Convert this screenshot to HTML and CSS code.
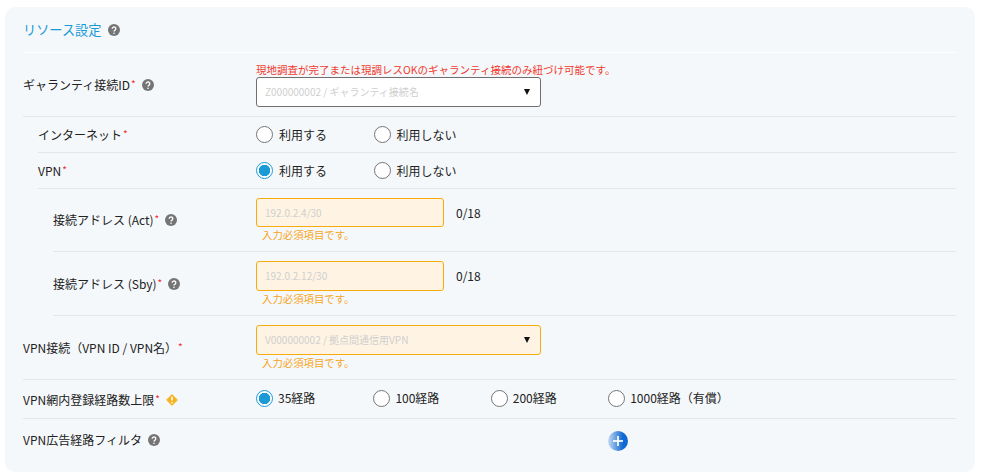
FILE: index.html
```html
<!DOCTYPE html>
<html lang="ja">
<head>
<meta charset="utf-8">
<title>リソース設定</title>
<link rel="stylesheet" href="styles.css">
</head>
<body>
<svg class="defs" width="0" height="0" aria-hidden="true">
  <symbol id="help" viewBox="0 0 12 12">
    <circle cx="6" cy="6" r="6" fill="#757575"/>
    <path d="M4.2 4.7a1.8 1.7 0 1 1 2.8 1.4c-.7.5-1 .8-1 1.5" fill="none" stroke="#fff" stroke-width="1.3"/>
    <circle cx="6" cy="9.3" r=".8" fill="#fff"/>
  </symbol>
</svg>
<main class="card">
  <h2 class="title">リソース設定 <svg class="help"><use href="#help"/></svg></h2>

  <section class="row row-guarantee">
    <div class="label">ギャランティ接続ID<i>*</i><svg class="help"><use href="#help"/></svg></div>
    <div class="control">
      <p class="notice">現地調査が完了または現調レスOKのギャランティ接続のみ紐づけ可能です。</p>
      <div class="select"><span>Z000000002 / ギャランティ接続名</span><b class="arrow"></b></div>
    </div>
  </section>

  <section class="row row-radio indent1">
    <div class="label">インターネット<i>*</i></div>
    <div class="control radios">
      <span class="radio"><b class="dot"></b>利用する</span>
      <span class="radio"><b class="dot"></b>利用しない</span>
    </div>
  </section>

  <section class="row row-radio indent1">
    <div class="label">VPN<i>*</i></div>
    <div class="control radios">
      <span class="radio"><b class="dot on"></b>利用する</span>
      <span class="radio"><b class="dot"></b>利用しない</span>
    </div>
  </section>

  <section class="row row-address indent2">
    <div class="label">接続アドレス (Act)<i>*</i><svg class="help"><use href="#help"/></svg></div>
    <div class="control">
      <div class="input-line"><div class="input">192.0.2.4/30</div><span class="count">0/18</span></div>
      <p class="error">入力必須項目です。</p>
    </div>
  </section>

  <section class="row row-sby indent2">
    <div class="label">接続アドレス (Sby)<i>*</i><svg class="help"><use href="#help"/></svg></div>
    <div class="control">
      <div class="input-line"><div class="input tall">192.0.2.12/30</div><span class="count">0/18</span></div>
      <p class="error">入力必須項目です。</p>
    </div>
  </section>

  <section class="row row-sby">
    <div class="label">VPN接続（VPN ID / VPN名）<i>*</i></div>
    <div class="control">
      <div class="select warn"><span>V000000002 / 拠点間通信用VPN</span><b class="arrow"></b></div>
      <p class="error">入力必須項目です。</p>
    </div>
  </section>

  <section class="row row-limit">
    <div class="label">VPN網内登録経路数上限<i>*</i>
      <svg class="warn-icon" viewBox="0 0 12 12"><path d="M6 0 12 6 6 12 0 6Z" fill="#f5b21f" stroke="#f5b21f" stroke-width="1" stroke-linejoin="round" transform="translate(.6 .6) scale(.9)"/><path d="M6 2.8v3.8" stroke="#fff" stroke-width="1.5"/><circle cx="6" cy="8.5" r=".85" fill="#fff"/></svg>
    </div>
    <div class="control radios wide">
      <span class="radio"><b class="dot on"></b>35経路</span>
      <span class="radio"><b class="dot"></b>100経路</span>
      <span class="radio"><b class="dot"></b>200経路</span>
      <span class="radio"><b class="dot"></b>1000経路（有償）</span>
    </div>
  </section>

  <section class="row row-filter">
    <div class="label">VPN広告経路フィルタ<svg class="help"><use href="#help"/></svg></div>
    <div class="control add"><span class="plus"></span></div>
  </section>
</main>
</body>
</html>
```
FILE: styles.css
```css
* { box-sizing: border-box; }
html, body { margin: 0; padding: 0; background: #fff; }
body {
  width: 982px; height: 474px; overflow: hidden;
  padding: 7px 7px 2px 5px;
  font-family: "Noto Sans CJK JP", "Noto Sans", sans-serif;
  font-size: 12px; color: #222; line-height: 16px;
}
.defs { position: absolute; }
.card {
  height: 465px; background: #f5f8fb; border-radius: 10px;
  padding: 0 19px 0 18px;
}
.title {
  margin: 0; height: 46px; padding-top: 15px;
  border-bottom: 1px solid #fff;
  font-size: 13.2px; font-weight: 400; color: #1b9ad6;
  display: flex; align-items: flex-start; gap: 2px;
}
.title .help { margin: 2px 0 0 5px; }
.help { width: 12px; height: 12px; flex: none; margin-left: 6px; }
.row { display: flex; border-bottom: 1px solid #e3e7eb; align-items: center; }
.row:last-child { border-bottom: 0; align-items: flex-start; }
.label { width: 233px; flex: none; display: flex; align-items: center; white-space: nowrap; }
.label i { color: #f02b2b; font-style: normal; font-size: 10px; margin-left: 1px; align-self: flex-start; line-height: 14px; }
.indent1 { margin-left: 15px; }
.indent1 .label { width: 218px; }
.indent2 { margin-left: 30px; }
.indent2 .label { width: 203px; }
.row-guarantee { height: 64px; }
.row-radio { height: 36px; }
.row-address { height: 63px; }
.row-sby { height: 64px; }
.row-limit { height: 39px; }
.row-limit .label { padding-top: 2px; }
.row-limit .control { margin-top: -2px; }
.row-filter { height: 40px; padding-top: 13px; }
.notice { margin: 0; color: #f03a2e; font-size: 10.5px; line-height: 14px; white-space: nowrap; }
.select {
  width: 285px; height: 30px; border: 1px solid #6f6f6f; border-radius: 3px;
  background: #fff; display: flex; align-items: center; justify-content: space-between;
  padding: 0 10px 0 8px; font-size: 10px; color: #cfcfcf;
}
.select.warn { background: #fff4e3; border-color: #f7ab0c; }
.arrow { width: 0; height: 0; border: 3.5px solid transparent; border-top: 6px solid #111; border-bottom: 0; }
.radios { display: flex; gap: 46.5px; align-items: center; }
.radios.wide { gap: 0; }
.radios.wide .radio { width: 117.4px; gap: 5px; }
.radio { display: inline-flex; align-items: center; gap: 6px; white-space: nowrap; }
.dot {
  width: 17px; height: 17px; flex: none; border-radius: 50%;
  border: 1px solid #757575; background: #fff; display: block;
}
.dot.on { border-color: #1b9ad6; background: radial-gradient(circle, #1b9ad6 0 5.4px, #fff 6px); }
.input-line { display: flex; align-items: center; gap: 12px; }
.input {
  width: 188px; height: 29px; border: 1px solid #f7ab0c; border-radius: 3px;
  background: #fff4e3; padding-left: 8px; font-size: 10px; line-height: 27px; color: #cfcfcf;
}
.input.tall { height: 30px; line-height: 28px; }
.count { color: #222; }
.error { margin: 1px 0 0 6px; color: #f5a623; font-size: 10.4px; line-height: 14px; }
.add { padding-left: 352px; margin-top: -1px; }
.plus {
  display: block; width: 20px; height: 20px; border-radius: 50%; position: relative;
  background: linear-gradient(90deg, #c4daf2, #0f68d3 75%);
}
.plus::before, .plus::after { content: ""; position: absolute; background: #fff; opacity: .85; }
.plus::before { left: 5px; top: 9.25px; width: 10px; height: 1.5px; }
.plus::after { left: 9.25px; top: 5px; width: 1.5px; height: 10px; }
.warn-icon { width: 12px; height: 12px; margin-left: 6px; }
```
